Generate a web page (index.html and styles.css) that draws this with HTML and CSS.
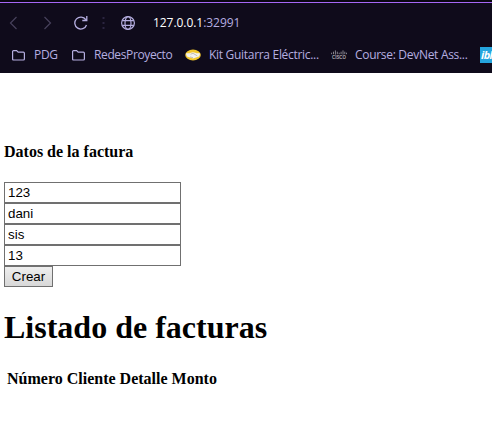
FILE: index.html
```html
<!DOCTYPE html>
<html lang="es">
<head>
<meta charset="utf-8">
<title>Facturas</title>
<link rel="stylesheet" href="styles.css">
</head>
<body>
<header class="browser">
  <div class="toolbar">
    <svg class="nav back" width="10" height="14" viewBox="0 0 10 14"><path d="M7.5 1 1.5 7l6 6"/></svg>
    <svg class="nav forward" width="10" height="14" viewBox="0 0 10 14"><path d="M1.5 1l6 6-6 6"/></svg>
    <svg class="reload" width="14" height="14" viewBox="0 0 14 14"><path d="M12.5 9A6 6 0 1 1 11.8 3.7M12.8 0v4.5H8.3"/></svg>
    <svg class="dots" width="3" height="12" viewBox="0 0 3 12"><path d="M.5 1h2M.5 6h2M.5 11h2"/></svg>
    <svg class="globe" width="14" height="14" viewBox="0 0 14 14"><circle cx="7" cy="7" r="6.4"/><ellipse cx="7" cy="7" rx="3" ry="6.4"/><path d="M1.2 4.7h11.6M1.2 9.3h11.6"/></svg>
    <div class="url"><b>127.0.0.1</b>:32991</div>
  </div>
  <nav class="bookmarks">
    <a class="mark pdg"><svg class="folder" width="13" height="11" viewBox="0 0 13 11"><path d="M.6 9V1.6Q.6.6 1.6.6h3l1.6 1.6h5.2q1 0 1 1V9q0 1-1 1H1.6q-1 0-1-1z"/></svg><span>PDG</span></a>
    <a class="mark redes"><svg class="folder" width="13" height="11" viewBox="0 0 13 11"><path d="M.6 9V1.6Q.6.6 1.6.6h3l1.6 1.6h5.2q1 0 1 1V9q0 1-1 1H1.6q-1 0-1-1z"/></svg><span>RedesProyecto</span></a>
    <a class="mark kit"><svg width="16" height="12" viewBox="0 0 16 12"><ellipse cx="8" cy="6" rx="7.8" ry="5.4" fill="#f2c72c"/><path d="M1.3 3.9Q4 4.8 5.7 3.7 8 2.7 10.3 3.7q2 1 4.4.2.6 2-.7 3.6L8 9.5 2 7.4Q.7 5.7 1.3 3.9z" fill="#f3f1ed"/><path d="M5.5 5.2 8 4.3l4.3 2.6M5 7.9l3 .8" fill="none" stroke="#aaa69b" stroke-width=".7"/></svg><span>Kit Guitarra Eléctric...</span></a>
    <a class="mark course"><svg width="16" height="10" viewBox="0 0 16 10"><path d="M.6 2.7v1.5M2.5 1.7v2.5M4.4.4v4.2M6.3 1.7v2.5M8.2 2.7v1.5M10.1 1.7v2.5M12 .4v4.2M13.8 1.7v2.5M15.5 2.7v1.5" stroke="#85838c" fill="none"/><text class="cisco" x="1" y="9.4" textLength="14" lengthAdjust="spacingAndGlyphs">CISCO</text></svg><span>Course: DevNet Ass...</span></a>
    <a class="mark ibl">ibl</a>
  </nav>
</header>
<main>
  <h4>Datos de la factura</h4>
  <form>
    <input type="text" value="123">
    <input type="text" value="dani">
    <input type="text" value="sis">
    <input type="text" value="13">
    <button type="button">Crear</button>
  </form>
  <h1>Listado de facturas</h1>
  <table><tr><th>Número</th><th>Cliente</th><th>Detalle</th><th>Monto</th></tr></table>
</main>
</body>
</html>
```
FILE: styles.css
```css
* { box-sizing: border-box; }
body {
  margin: 0;
  height: 426px;
  overflow: hidden;
  background: #fff;
  color: #000;
  font-family: "Liberation Serif", serif;
}
.browser {
  height: 73px;
  overflow: hidden;
  border-top: 2px solid #090711;
  background: #0f0b1b;
  color: #b5aee0;
  font: 12px/16px "Open Sans", sans-serif;
}
.toolbar {
  display: flex;
  align-items: center;
  height: 40px;
  padding-left: 9px;
  border-top: 1px solid #a566f5;
}
.browser svg { flex: none; }
.nav, .reload, .dots, .globe, .folder { fill: none; stroke: #b5aee0; stroke-width: 1.2; }
.nav { stroke: #47415c; }
.forward { margin-left: 24px; }
.reload { margin-left: 21px; stroke-width: 1.3; }
.dots { margin-left: 14px; stroke: #2b2540; stroke-width: 2; }
.globe { margin-left: 16px; }
.url { margin-left: 18px; letter-spacing: -0.05px; }
.url b { color: #fff; font-weight: 500; }
.bookmarks {
  display: flex;
  align-items: center;
  height: 26px;
  padding-left: 12px;
}
.mark {
  display: flex;
  flex: none;
  align-items: center;
  white-space: nowrap;
}
.mark span { letter-spacing: -0.3px; }
.pdg { width: 60px; gap: 9px; }
.redes { width: 113px; gap: 9px; }
.redes span { letter-spacing: -0.38px; }
.kit { width: 146px; gap: 8px; }
.course { width: 149px; gap: 8px; }
.cisco { fill: #aaa8ae; font: bold 5px "Liberation Sans", sans-serif; }
.ibl {
  width: 16px;
  height: 16px;
  padding-left: 1px;
  background: #25a5de;
  color: #fff;
  font: italic bold 11px/16px "Open Sans", sans-serif;
  letter-spacing: -0.6px;
}
main { padding: 70px 4px 0; }
h4 { margin: 0; font-size: 16px; line-height: 18px; }
form {
  display: flex;
  flex-direction: column;
  align-items: flex-start;
  margin-top: 21px;
}
input {
  width: 177px;
  height: 21px;
  padding: 1px 3px;
  border: 1px solid #707070;
  border-radius: 0;
  background: #fff;
  color: #000;
  font: 13.333px "Liberation Sans", sans-serif;
}
button {
  width: 49px;
  height: 21px;
  padding: 0;
  border: 1px solid #707070;
  border-radius: 0;
  background: linear-gradient(#eee, #d8d8d8);
  color: #000;
  font: 13.333px "Liberation Sans", sans-serif;
}
h1 { margin: 22px 0 21px; font-size: 32px; line-height: 37px; }
table { border-spacing: 2px; }
th { padding: 1px; font-size: 16px; line-height: 18px; }
```
